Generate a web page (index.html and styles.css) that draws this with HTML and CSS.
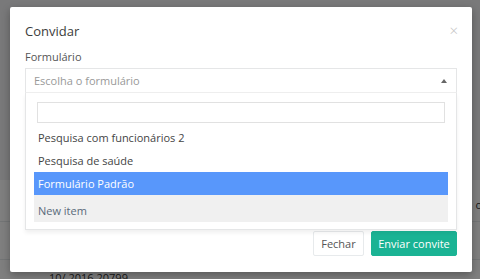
FILE: index.html
```html
<!DOCTYPE html>
<html lang="pt">
<head>
<meta charset="utf-8">
<title>Convidar</title>
<link rel="stylesheet" href="styles.css">
</head>
<body>
<div class="page">
  <div class="page-row row-a"><span class="row-end">o</span></div>
  <div class="page-row row-b"></div>
  <div class="page-row row-c"><span class="row-text">10/ 2016 20799</span></div>
</div>
<div class="backdrop"></div>
<div class="modal">
  <div class="modal-header">
    <h4 class="modal-title">Convidar</h4>
    <span class="close">&times;</span>
  </div>
  <div class="modal-body">
    <label class="field-label">Formulário</label>
    <div class="select">
      <div class="select-choice">
        <span class="select-placeholder">Escolha o formulário</span>
        <span class="select-arrow"></span>
      </div>
      <div class="select-drop">
        <div class="select-search"><input class="search-input" type="text"></div>
        <ul class="select-results">
          <li class="result">Pesquisa com funcionários 2</li>
          <li class="result">Pesquisa de saúde</li>
          <li class="result highlighted">Formulário Padrão</li>
          <li class="result new-item">New item</li>
        </ul>
      </div>
    </div>
  </div>
  <div class="modal-footer">
    <button class="btn btn-white">Fechar</button>
    <button class="btn btn-primary">Enviar convite</button>
  </div>
</div>
</body>
</html>
```

FILE: styles.css
```css
* { box-sizing: border-box; }
html, body {
  margin: 0;
  padding: 0;
  width: 480px;
  height: 279px;
  overflow: hidden;
  font-family: "Open Sans", "DejaVu Sans", sans-serif;
}
body {
  background: #f3f3f4;
  position: relative;
}
.page {
  padding-top: 180px;
}
.page-row {
  position: relative;
  border-bottom: 1px solid #e7eaec;
  background: #fff;
  overflow: hidden;
}
.row-a { height: 42px; }
.row-b { height: 38px; }
.row-c { height: 19px; border-bottom: 0; }
.row-end {
  position: absolute;
  right: -2px;
  top: 17px;
  font-size: 11px;
  color: #333;
}
.row-text {
  position: absolute;
  left: 49px;
  top: 10px;
  font-size: 11px;
  color: #333;
}
.backdrop {
  position: absolute;
  inset: 0;
  background: rgba(0, 0, 0, 0.5);
}
.modal {
  position: absolute;
  left: 10px;
  top: 7px;
  width: 462px;
  height: 265px;
  background: #fff;
  border-radius: 2px;
  box-shadow: 0 3px 9px rgba(0, 0, 0, 0.3);
  display: flex;
  flex-direction: column;
}
.modal-header {
  position: relative;
  padding: 15px 15px 10px;
}
.modal-title {
  margin: 0;
  font-size: 13px;
  line-height: 18px;
  font-weight: 400;
  color: #3c3c3c;
}
.close {
  position: absolute;
  right: 14px;
  top: 14px;
  font-size: 15px;
  line-height: 18px;
  color: #c4c4c4;
  font-weight: 300;
}
.modal-body {
  flex: 1;
  padding: 0 15px;
}
.field-label {
  display: block;
  font-size: 11px;
  line-height: 14px;
  color: #555;
  margin-bottom: 4px;
}
.select {
  position: relative;
}
.select-choice {
  height: 25px;
  border: 1px solid #e5e6e7;
  border-bottom-color: #eee;
  display: flex;
  align-items: center;
  justify-content: space-between;
  padding: 0 8px 0 8px;
  background: #fff;
}
.select-placeholder {
  font-size: 11px;
  color: #999;
}
.select-arrow {
  width: 0;
  height: 0;
  border-left: 3px solid transparent;
  border-right: 3px solid transparent;
  border-bottom: 4px solid #666;
  margin-right: 1px;
}
.select-drop {
  position: absolute;
  left: 0;
  right: 0;
  top: 25px;
  height: 137px;
  background: #fff;
  border: 1px solid #e5e6e7;
  border-top: 0;
  z-index: 2;
  box-shadow: 0 3px 4px rgba(0, 0, 0, 0.06);
}
.select-search {
  padding: 9px 11px 3px 11px;
}
.search-input {
  display: block;
  width: 100%;
  height: 21px;
  border: 1px solid #e1e1e1;
  outline: none;
  margin: 0;
  padding: 0 4px;
  background: #fff;
}
.select-results {
  list-style: none;
  margin: 0 8px 0 8px;
  padding: 0;
}
.result {
  height: 23px;
  line-height: 23px;
  padding-left: 4px;
  font-size: 11px;
  color: #444;
}
.highlighted {
  background: #5897fb;
  color: #fff;
}
.new-item {
  height: 27px;
  line-height: 31px;
  background: #f0f0f0;
  color: #5a6a7a;
}
.modal-footer {
  display: flex;
  justify-content: flex-end;
  gap: 7px;
  padding: 0 15px 16px;
}
.btn {
  height: 25px;
  padding: 0 12px;
  font-family: "Open Sans", "DejaVu Sans", sans-serif;
  font-size: 11px;
  border-radius: 2px;
  cursor: pointer;
}
.btn-white {
  background: #fff;
  border: 1px solid #e7eaec;
  color: #555;
  width: 51px;
  padding: 0;
}
.btn-primary {
  background: #1ab394;
  border: 1px solid #1ab394;
  color: #fff;
  width: 86px;
  padding: 0;
}
```
